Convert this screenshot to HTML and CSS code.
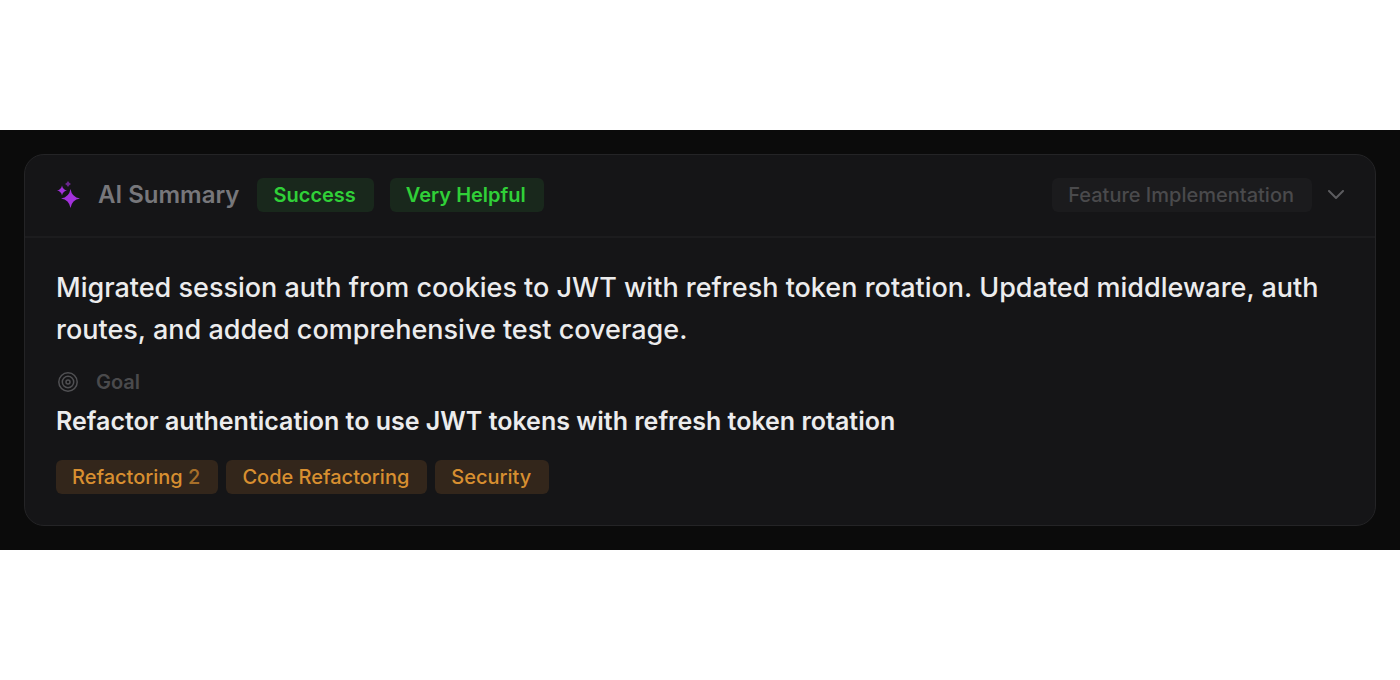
FILE: index.html
```html
<!DOCTYPE html>
<html lang="en">
<head>
<meta charset="utf-8">
<title>AI Summary</title>
<link rel="stylesheet" href="styles.css">
</head>
<body>
<main class="stage">
  <section class="card">
    <header class="card-header">
      <svg class="icon-sparkles" viewBox="0 0 24 28" aria-hidden="true">
        <path d="M14.5 8 Q15.8 16.2 24 17.5 Q15.8 18.8 14.5 27 Q13.2 18.8 5 17.5 Q13.2 16.2 14.5 8Z"/>
        <path d="M6 4.5 Q6.8 8.7 11 9.5 Q6.8 10.3 6 14.5 Q5.2 10.3 1 9.5 Q5.2 8.7 6 4.5Z"/>
        <path class="faint" d="M12 0 Q13 2 15 3 Q13 4 12 6 Q11 4 9 3 Q11 2 12 0Z"/>
      </svg>
      <h2 class="title">AI Summary</h2>
      <span class="badge badge-success">Success</span>
      <span class="badge badge-success badge-rating">Very Helpful</span>
      <span class="badge badge-muted">Feature Implementation</span>
      <button class="toggle" type="button" aria-label="Collapse summary" aria-expanded="true">
        <svg class="icon-chevron" viewBox="0 0 16 10" aria-hidden="true"><path d="M1 1l7 7 7-7"/></svg>
      </button>
    </header>
    <div class="card-body">
      <p class="summary">Migrated session auth from cookies to JWT with refresh token rotation. Updated middleware, auth routes, and added comprehensive test coverage.</p>
      <h3 class="goal-label">
        <svg class="icon-goal" viewBox="0 0 20 20" aria-hidden="true"><circle cx="10" cy="10" r="9.2"/><circle cx="10" cy="10" r="5.7"/><circle cx="10" cy="10" r="2"/></svg>
        Goal
      </h3>
      <p class="goal">Refactor authentication to use JWT tokens with refresh token rotation</p>
      <ul class="tags">
        <li class="badge badge-tag">Refactoring <span class="count">2</span></li>
        <li class="badge badge-tag">Code Refactoring</li>
        <li class="badge badge-tag">Security</li>
      </ul>
    </div>
  </section>
</main>
</body>
</html>
```
FILE: styles.css
```css
* { box-sizing: border-box; }

body {
  margin: 0;
  min-height: 100vh;
  display: flex;
  align-items: center;
  background: #fff;
  font-family: Inter, "Liberation Sans", sans-serif;
}

h2, h3, p, ul { margin: 0; padding: 0; }

.stage {
  flex: 1;
  padding: 24px;
  background: #0b0b0b;
}

.card {
  border: 1px solid #242426;
  border-radius: 20px;
  background: #151517;
}

.card-header {
  display: flex;
  align-items: center;
  padding: 23px 31px 24px;
  border-bottom: 2px solid #1c1c1e;
}

.icon-sparkles {
  width: 24px;
  height: 28px;
  fill: #a332dc;
}

.icon-sparkles .faint { opacity: 0.6; }

.title {
  margin: 0 18px;
  font-size: 24px;
  line-height: 34px;
  font-weight: 600;
  color: #77777b;
}

.badge {
  padding: 0 18px 0 16px;
  border-radius: 6px;
  font-size: 20px;
  line-height: 34px;
  font-weight: 500;
  white-space: nowrap;
}

.badge-success {
  background: #19281c;
  color: #30d038;
  font-weight: 600;
}

.badge-rating { margin-left: 16px; }

.badge-muted {
  margin-left: auto;
  background: #1b1b1d;
  color: #4a4a4c;
}

.toggle {
  display: flex;
  margin-left: 16px;
  padding: 0;
  border: 0;
  background: none;
}

.icon-chevron {
  width: 16px;
  height: 10px;
  fill: none;
  stroke: #5c5c5f;
  stroke-width: 2;
  stroke-linecap: round;
  stroke-linejoin: round;
}

.card-body { padding: 29px 31px 31px; }

.summary,
.goal {
  color: #ececed;
  line-height: 42px;
}

.summary { font-size: 27px; font-weight: 500; }
.goal { font-size: 25px; font-weight: 600; }

.goal-label {
  display: flex;
  align-items: center;
  gap: 18px;
  margin: 16px 0 3px;
  padding-left: 2px;
  font-size: 20px;
  line-height: 30px;
  font-weight: 600;
  color: #4a4a4c;
}

.icon-goal {
  width: 20px;
  height: 20px;
  fill: none;
  stroke: #505053;
  stroke-width: 1.5;
}

.tags {
  display: flex;
  flex-wrap: wrap;
  gap: 8px;
  margin-top: 18px;
  list-style: none;
}

.badge-tag {
  background: #33261b;
  color: #d88f30;
}

.count { opacity: 0.7; }
```
